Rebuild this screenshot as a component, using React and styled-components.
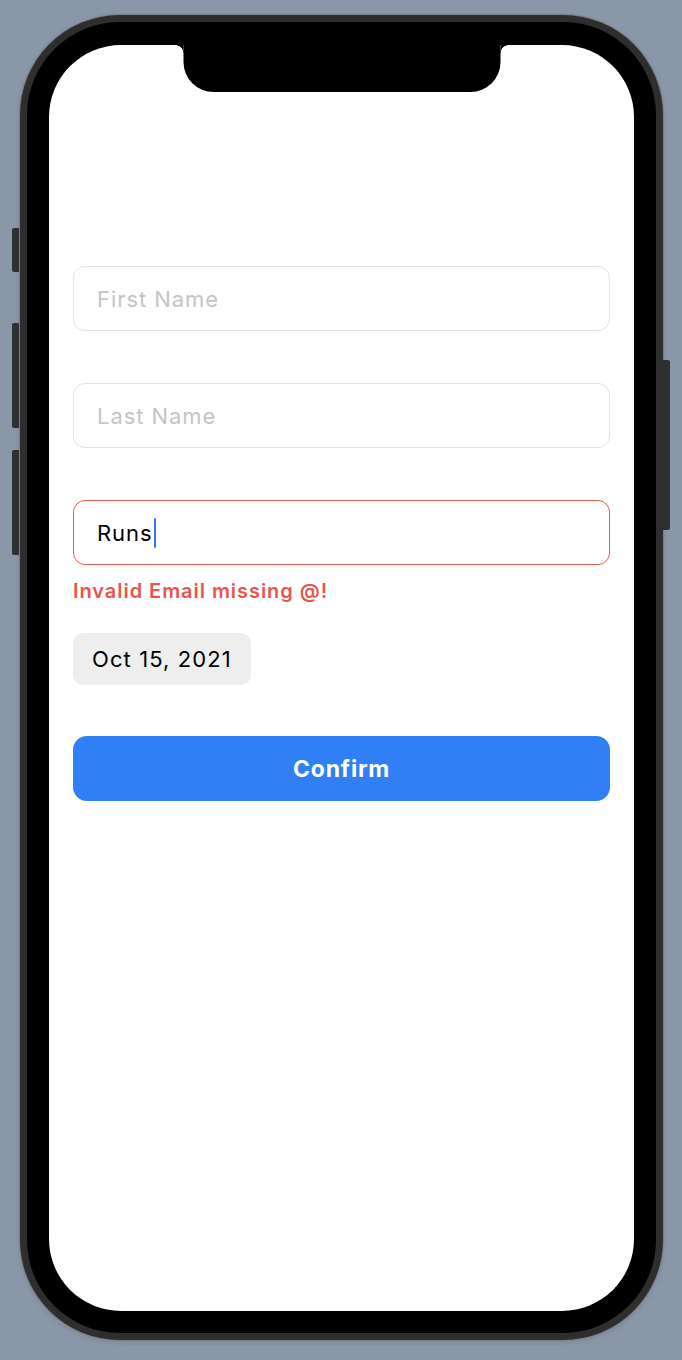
import React from "react";
import styled, { createGlobalStyle } from "styled-components";

const GlobalStyle = createGlobalStyle`
  html, body {
    margin: 0;
    padding: 0;
    background: #8a97a9;
  }
  body {
    font-family: Inter, "Noto Sans", "Liberation Sans", sans-serif;
  }
`;

function App() {
  return (
    <>
      <GlobalStyle />
      <Stage>
        <Phone>
          <SideButton side="left" top={213} height={44} />
          <SideButton side="left" top={308} height={105} />
          <SideButton side="left" top={435} height={105} />
          <SideButton side="right" top={345} height={170} />
          <Bezel>
            <Screen>
              <Notch />
              <Form>
                <Field placeholder="First Name" />
                <Field placeholder="Last Name" />
                <FieldGroup>
                  <Field invalid>
                    <Value>Runs</Value>
                    <Caret />
                  </Field>
                  <ErrorText>Invalid Email missing @!</ErrorText>
                </FieldGroup>
                <DateChip>Oct 15, 2021</DateChip>
                <ConfirmButton>Confirm</ConfirmButton>
              </Form>
            </Screen>
          </Bezel>
        </Phone>
      </Stage>
    </>
  );
}

function Field({ placeholder, invalid, children }) {
  return (
    <InputBox invalid={invalid}>
      {children ? children : <Placeholder>{placeholder}</Placeholder>}
    </InputBox>
  );
}

const Stage = styled.div`
  padding: 15px 0 0 20px;
  height: 1345px;
  box-sizing: border-box;
`;

const Phone = styled.div`
  position: relative;
  width: 643px;
  height: 1325px;
  box-sizing: border-box;
  padding: 7px;
  border-radius: 100px;
  background: #2e2e2f;
  box-shadow: 0 0 0 1px #7b7f86, 0 2px 6px rgba(0, 0, 0, 0.12);
`;

const SideButton = styled.div`
  position: absolute;
  top: ${(p) => p.top}px;
  ${(p) => (p.side === "left" ? "left: -8px;" : "right: -7px;")}
  width: 7px;
  height: ${(p) => p.height}px;
  background: #2f3032;
  border-radius: ${(p) => (p.side === "left" ? "2px 0 0 2px" : "0 2px 2px 0")};
`;

const Bezel = styled.div`
  height: 100%;
  box-sizing: border-box;
  padding: 23px 22px 22px 22px;
  border-radius: 93px;
  background: #000;
`;

const Screen = styled.div`
  position: relative;
  height: 100%;
  background: #fff;
  border-radius: 72px;
  overflow: hidden;
`;

const Notch = styled.div`
  position: absolute;
  top: 0;
  left: 50%;
  transform: translateX(-50%);
  width: 317px;
  height: 47px;
  background: #000;
  border-radius: 0 0 30px 30px;

  &::before,
  &::after {
    content: "";
    position: absolute;
    top: 0;
    width: 8px;
    height: 8px;
  }
  &::before {
    left: -8px;
    background: radial-gradient(circle at 0 100%, transparent 7.5px, #000 8px);
  }
  &::after {
    right: -8px;
    background: radial-gradient(circle at 100% 100%, transparent 7.5px, #000 8px);
  }
`;

const Form = styled.div`
  display: flex;
  flex-direction: column;
  align-items: flex-start;
  gap: 52px;
  padding: 221px 24px 0 24px;
`;

const FieldGroup = styled.div`
  display: flex;
  flex-direction: column;
  align-self: stretch;
  margin-bottom: -4px;
`;

const InputBox = styled.div`
  display: flex;
  align-items: center;
  align-self: stretch;
  height: 65px;
  box-sizing: border-box;
  padding: 0 23px;
  border: 1.5px solid ${(p) => (p.invalid ? "#e85a50" : "#e3e3e5")};
  border-radius: 12px;
  font-size: 22px;
  letter-spacing: 0.95px;
`;

const Placeholder = styled.span`
  color: #c4c4c7;
`;

const Value = styled.span`
  color: #000;
`;

const Caret = styled.span`
  display: inline-block;
  width: 2.5px;
  height: 30px;
  margin-left: 1px;
  background: #3478f6;
  border-radius: 1px;
`;

const ErrorText = styled.div`
  margin-top: 12px;
  font-size: 20px;
  line-height: 28px;
  font-weight: 600;
  letter-spacing: 0.95px;
  color: #e8554b;
`;

const DateChip = styled.div`
  display: flex;
  align-items: center;
  height: 52px;
  box-sizing: border-box;
  padding: 0 19px;
  border-radius: 10px;
  background: #eeeeef;
  font-size: 22px;
  letter-spacing: 1.1px;
  color: #000;
  margin-top: -20px;
`;

const ConfirmButton = styled.button`
  align-self: stretch;
  height: 65px;
  border: none;
  border-radius: 14px;
  background: #317ff5;
  color: #fff;
  font-family: inherit;
  font-size: 23px;
  font-weight: 700;
  letter-spacing: 0.8px;
  margin-top: -1px;
`;

export default App;
